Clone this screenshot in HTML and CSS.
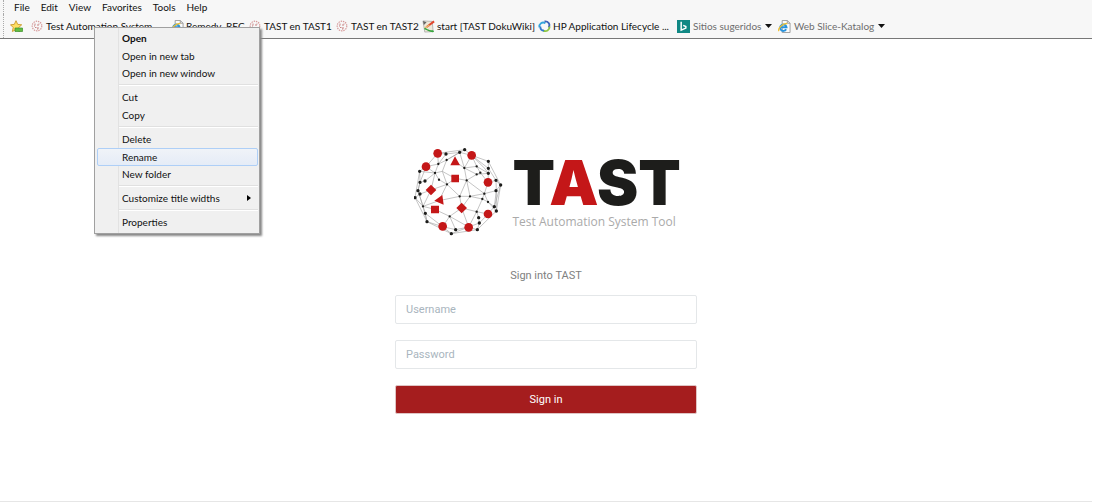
FILE: index.html
```html
<!DOCTYPE html>
<html lang="en">
<head>
<meta charset="utf-8">
<title>TAST</title>
<link rel="stylesheet" href="styles.css">
</head>
<body>
<svg class="defs" aria-hidden="true">
  <symbol id="tast" viewBox="0 0 12 12">
    <circle cx="6" cy="6" r="4.8" fill="none" stroke="#d79a9a" stroke-width="1.2" stroke-dasharray="1.4 .9"/>
    <path d="M4 3.5v2M6 5h2M4 7.5h1.500M7 7v2M8 3.500v1M3 6h1M6 9h1" stroke="#c98383" fill="none"/>
  </symbol>
  <symbol id="ie" viewBox="0 0 14 14">
    <path d="M4.500.500h5.500l3 3v10H4.500z" fill="#fbfbfb" stroke="#999"/>
    <path d="M10 .5v3h3" fill="none" stroke="#999"/>
    <path d="M8.800 10A3.500 3.500 0 1 1 9.200 7.800H2.500" fill="none" stroke="#2a93dc" stroke-width="2"/>
    <path d="M1 12C-.5 9 5 3.500 10 3.800" fill="none" stroke="#f0c030" stroke-width="1.400"/>
  </symbol>
</svg>
<header class="browser">
  <nav class="menubar" aria-label="Menu bar">
    <button>File</button><button>Edit</button><button>View</button><button>Favorites</button><button>Tools</button><button>Help</button>
  </nav>
  <nav class="favorites" aria-label="Favorites">
    <button class="star" aria-label="Add to favorites">
      <svg width="14" height="13" viewBox="0 0 14 13"><path d="M6 .7l1.700 3.700 4 .4-3 2.700.8 4L6 9.500l-3.600 2 .8-4-2.700-2.700 3.800-.4z" fill="#ffdf63" stroke="#c9982a" stroke-width=".9"/><path d="M5 8h7.500v3.500H5z" fill="#62bd43" stroke="#3c8f2c" stroke-width=".7"/></svg>
    </button>
    <a href="#"><svg class="small"><use href="#tast"/></svg>Test Automation System</a>
    <a href="#"><svg class="icon"><use href="#ie"/></svg>Remedy_REC</a>
    <a href="#"><svg class="small"><use href="#tast"/></svg>TAST en TAST1</a>
    <a href="#"><svg class="small"><use href="#tast"/></svg>TAST en TAST2</a>
    <a href="#"><svg class="icon" viewBox="0 0 14 14"><path d="M1 1l10 .5 1 11L3 13z" fill="#eee8d8" stroke="#999" stroke-width=".7"/><path d="M1 1l4 1.500-3 3z" fill="#666"/><path d="M5 7.500l8-6" stroke="#e0452c" stroke-width="2.200"/><path d="M3 8.500l5-3" stroke="#e8b46a" stroke-width="1.500"/><path d="M2.500 8.500c3 0 3 2.500 9.500 2.500l1 2c-5 .5-7-2-10.500-3z" fill="#35a53d"/></svg>start [TAST DokuWiki]</a>
    <a href="#"><svg class="icon" viewBox="0 0 14 14" fill="none" stroke-width="2"><path d="M1.500 8C1 4 4.500 1.500 8 3.500" stroke="#34a6dc"/><path d="M7 1.500C11 1 13.500 4.500 11.500 8" stroke="#3d62b8"/><path d="M12.500 7C12.500 11 9 13 5.500 11.500" stroke="#8dc63f"/><path d="M2.500 7c0 2.500 1.500 4.500 4 4.500" stroke="#3479cc"/></svg>HP Application Lifecycle ...</a>
    <a href="#" class="muted"><svg class="icon" viewBox="0 0 14 14"><path d="M0 0h14v14H0z" fill="#108884"/><path d="M4.500 2v9l5-2.300V7L6.700 5.800" fill="none" stroke="#fff" stroke-width="1.600"/></svg>Sitios sugeridos<svg class="caret" viewBox="0 0 7 4"><path d="M0 0h7L3.500 4z"/></svg></a>
    <a href="#" class="muted"><svg class="icon"><use href="#ie"/></svg>Web Slice-Katalog<svg class="caret" viewBox="0 0 7 4"><path d="M0 0h7L3.500 4z"/></svg></a>
  </nav>
</header>

<div class="context-menu" role="menu">
  <button role="menuitem" class="default">Open</button>
  <button role="menuitem">Open in new tab</button>
  <button role="menuitem">Open in new window</button>
  <hr>
  <button role="menuitem">Cut</button>
  <button role="menuitem">Copy</button>
  <hr>
  <button role="menuitem">Delete</button>
  <button role="menuitem" class="active">Rename</button>
  <button role="menuitem">New folder</button>
  <hr>
  <button role="menuitem">Customize title widths<svg width="4" height="6" viewBox="0 0 4 6"><path d="M0 0l4 3-4 3z"/></svg></button>
  <hr>
  <button role="menuitem">Properties</button>
</div>

<main class="login">
  <div class="logo">
    <svg class="globe" viewBox="27 22 267 267" aria-hidden="true">
      <g fill="none" stroke="#999" stroke-width="1.700">
        <path d="M98 41L179 30 200 47 250 65 287 136 274 214 217 270 139 282 66 246 30 174 44 95 63 81z"/>
        <path d="M98 41L123 43 164 38 200 47 250 86 273 122 274 153 268 201 249 223 223 250 191 262 152 270 113 261 61 221 54 200 39 153 45 128 63 81 100 73 125 61 164 38 178 85 185 122 238 162 249 128 226 99 215 104 178 85 215 80 250 101 249 128 273 122 287 136"/>
        <path d="M63 81L90 100 102 120 126 134 164 170 195 170 238 162 249 187 274 214M98 41L100 73 90 100 78 151 54 200 30 174 45 163 78 151 126 134 150 116 185 122 195 170 232 178 249 187 268 201M44 95L90 100 112 95 150 116M112 95L125 61 179 30M112 95L126 134 102 183 54 200 89 209 134 230 170 205 195 170M102 183L164 170 170 205 215 216 232 178 238 162 273 153M170 205L191 262 134 230 113 261 66 246 54 200M134 230L152 270M191 262L215 216 249 223M215 216L221 234 223 250 217 270 191 262 139 282 113 261M164 170L185 122 215 104 250 101M200 47L215 80 226 99M250 65L250 101M200 47L238 85 250 101M150 65L178 85M44 95L45 128 60 124 90 100M45 128L39 153 54 200M287 136L268 201M273 122L287 136 273 153M274 153L274 214M61 221L66 246M123 43L100 73M200 47L178 85"/>
      </g>
      <g fill="none" stroke="#1d1d1b" stroke-width="10" stroke-linecap="round">
        <path d="M123 43h0M164 38h0M179 30h0M250 65h0M250 86h0M250 101h0M273 122h0M287 136h0M273 153h0M274 214h0M268 201h0M217 270h0M223 250h0M221 234h0M152 270h0M139 282h0M66 246h0M61 221h0M30 174h0M45 163h0M39 153h0M45 128h0M60 124h0M44 95h0"/>
        <path stroke-width="7" d="M100 73h0M125 61h0M90 100h0M102 120h0M126 134h0M178 85h0M185 122h0M215 80h0M215 104h0M226 99h0M238 162h0M232 178h0M249 187h0M195 170h0M164 170h0M134 230h0M215 216h0M54 200h0"/>
      </g>
      <g fill="#c41718">
        <circle cx="98" cy="41" r="13"/><circle cx="63" cy="81" r="13"/><circle cx="200" cy="47" r="13"/><circle cx="249" cy="128" r="13"/><circle cx="249" cy="223" r="13"/><circle cx="191" cy="263" r="13"/><circle cx="113" cy="260" r="13"/>
        <path d="M150 50l15 27h-29zM139 105h23v23h-23zM78 135l16 16-16 16-16-16zM170 189l16 16-16 16-16-16zM78 198h24v23H78zM112 166l4 29-28-12z"/>
      </g>
    </svg>
    <div class="wordmark">
      <div class="name">T<span>A</span>ST</div>
      <div class="tagline">Test Automation System Tool</div>
    </div>
  </div>
  <form class="form">
    <h1>Sign into TAST</h1>
    <input type="text" placeholder="Username" aria-label="Username">
    <input type="password" placeholder="Password" aria-label="Password">
    <button type="button">Sign in</button>
  </form>
</main>
</body>
</html>
```
FILE: styles.css
```css
* { box-sizing: border-box; }
body {
  margin: 0;
  padding: 0 4px 2px 0;
  min-height: 100vh;
  display: flex;
  flex-direction: column;
  background: #fff;
  color: #111;
  font: 10px/12px Lato, "Open Sans", sans-serif;
}
button {
  font: inherit;
  color: inherit;
  background: none;
  border: 0;
  padding: 0;
}
a { color: inherit; text-decoration: none; }
.defs { position: absolute; width: 0; height: 0; }

.browser {
  background: #f7f7f7;
  border-bottom: 1px solid #777;
  padding-left: 3px;
}
.menubar, .favorites { border-left: 1px dotted #aaa; }
.menubar { display: flex; gap: 11px; height: 14px; padding-left: 10px; }
.favorites {
  display: grid;
  grid-template-columns: 21px 140px 78px 87px 86px 116px 139px 101px 110px;
  align-items: center;
  height: 24px;
  padding-left: 6px;
}
.favorites a { display: flex; align-items: center; gap: 2px; white-space: nowrap; }
.star { display: flex; }
.icon { width: 13px; height: 13px; flex: none; }
.small { width: 12px; height: 12px; flex: none; margin-right: 1px; }
.muted { color: #6d6d6d; }
.muted .icon { margin-right: 1px; }
.caret { width: 7px; height: 4px; margin-left: 2px; fill: #111; }

.context-menu {
  position: absolute;
  left: 94px;
  top: 27px;
  width: 166px;
  height: 207px;
  padding: 1px 1px 2px 2px;
  display: flex;
  flex-direction: column;
  background: linear-gradient(90deg, #f0f0f0 23px, #e2e2e2 23px, #e2e2e2 24px, #f0f0f0 24px);
  border: 1px solid #a0a0a0;
  box-shadow: 2px 2px 2px #888;
}
.context-menu button {
  flex: 1;
  display: flex;
  align-items: center;
  justify-content: space-between;
  padding: 0 6px 0 24px;
  border: 1px solid transparent;
  border-radius: 2px;
}
.context-menu hr {
  width: 139px;
  height: 2px;
  margin: 2px 0 2px auto;
  border: 0;
  border-top: 1px solid #e0e0e0;
  border-bottom: 1px solid #fff;
}
.context-menu .default { font-weight: 700; }
.context-menu .active {
  background: linear-gradient(#f0f3f8, #e5ecf7);
  border-color: #aecff7;
}

.login {
  flex: 1;
  display: flex;
  flex-direction: column;
  align-items: center;
  padding-top: 108px;
  border-bottom: 1px solid #e6e6e6;
}
.logo { display: flex; gap: 10px; }
.globe { width: 89px; height: 89px; }
.wordmark { width: 166px; padding-top: 4px; white-space: nowrap; }
.name {
  font: 900 62px/64px Inter, sans-serif;
  color: #1d1d1b;
}
.name span { color: #c41718; }
.tagline { font: 12px/14px "Open Sans", sans-serif; color: #aaa; }

.form {
  width: 302px;
  max-width: 100%;
  margin-top: 32px;
  display: flex;
  flex-direction: column;
  gap: 16px;
  font: 11px/14px Roboto, sans-serif;
}
.form h1 {
  margin: 0 0 -4px;
  font: inherit;
  line-height: 15px;
  text-align: center;
  color: #808080;
}
.form input {
  height: 29px;
  padding: 0 10px;
  font: inherit;
  border: 1px solid #e4e7e9;
  border-radius: 2px;
}
.form input::placeholder { color: #a9b5be; opacity: 1; }
.form button {
  height: 29px;
  color: #fff;
  background: #a51d1e;
  border: 1px solid #dfc4c4;
  border-radius: 2px;
}
```
